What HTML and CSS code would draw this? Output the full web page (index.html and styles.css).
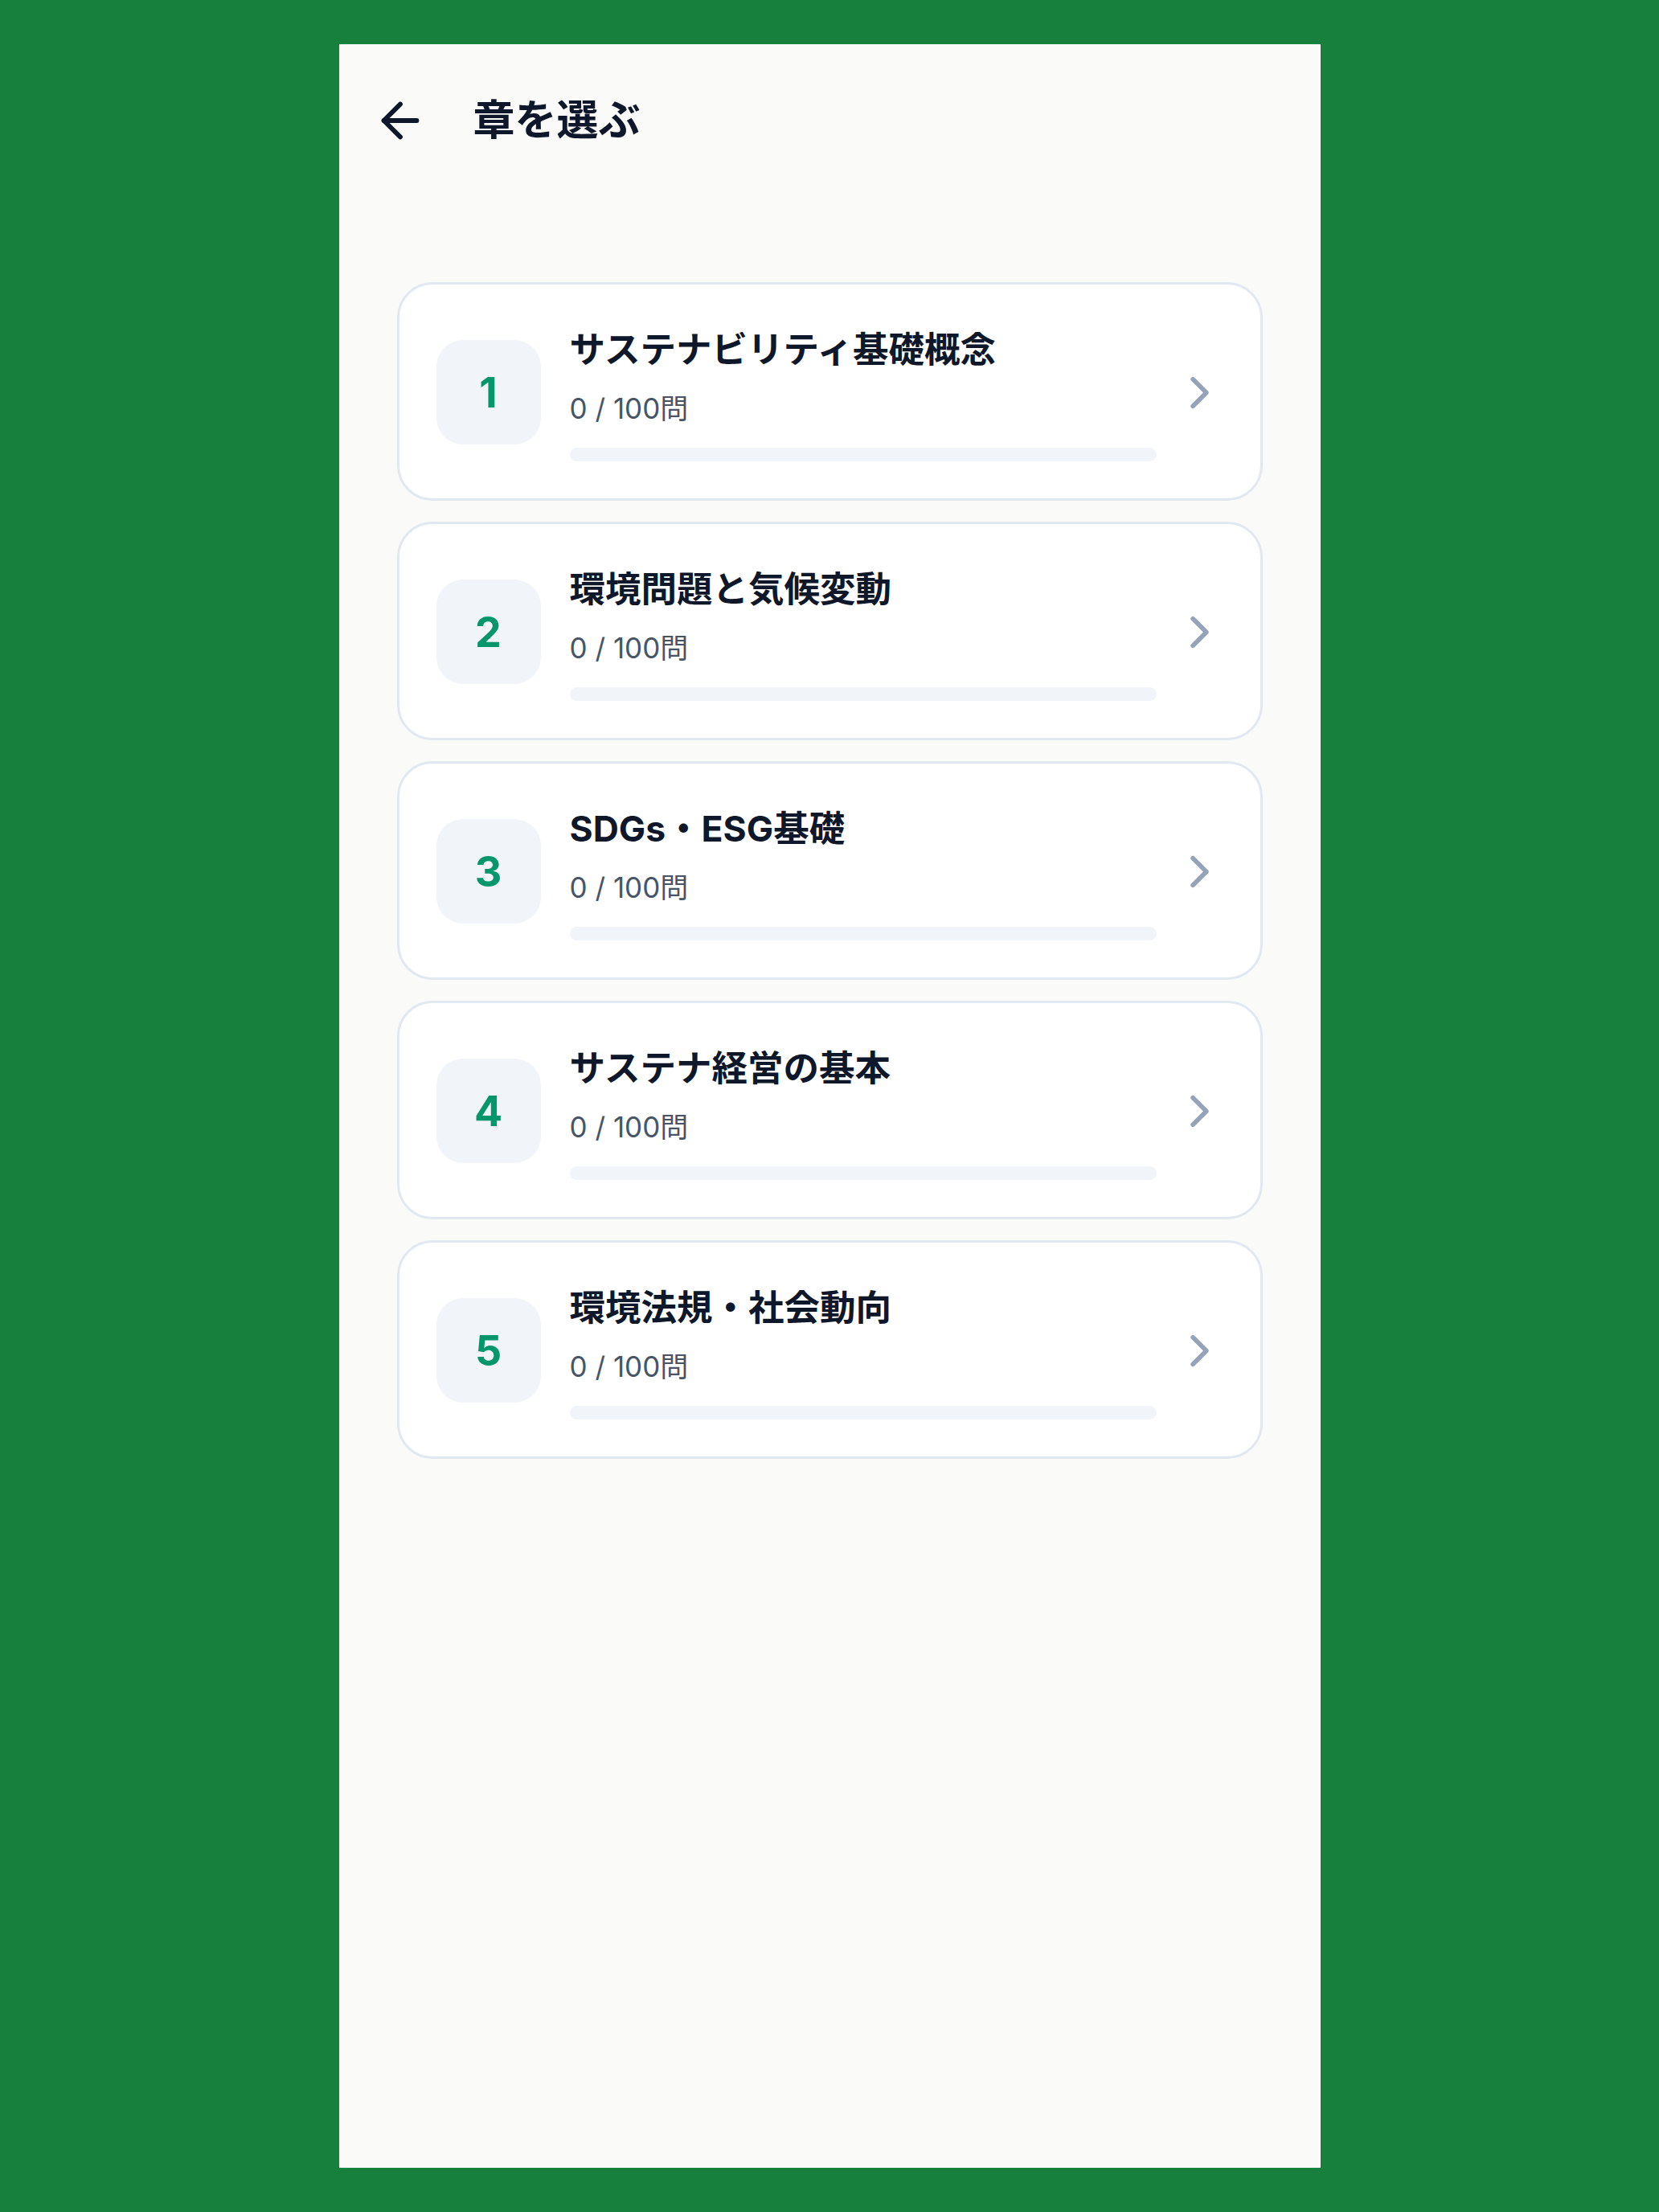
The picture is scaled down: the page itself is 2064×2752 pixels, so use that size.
FILE: index.html
```html
<!DOCTYPE html>
<html lang="ja">
<head>
<meta charset="utf-8">
<title>章を選ぶ</title>
<link rel="stylesheet" href="styles.css">
</head>
<body>
<div class="screen">
  <header class="topbar">
    <button class="back" aria-label="戻る">
      <svg viewBox="0 0 24 24" fill="none" stroke="currentColor" stroke-width="2" stroke-linecap="round" stroke-linejoin="round"><path d="m12 19-7-7 7-7"/><path d="M19 12H5"/></svg>
    </button>
    <h1 class="title">章を選ぶ</h1>
  </header>
  <main class="chapters">
    <a class="chapter" href="#">
      <div class="num">1</div>
      <div class="info">
        <div class="name">サステナビリティ基礎概念</div>
        <div class="count">0 / 100問</div>
        <div class="bar"><div class="fill" style="width:0%"></div></div>
      </div>
      <svg class="chev" viewBox="0 0 24 24" fill="none" stroke="currentColor" stroke-width="2" stroke-linecap="round" stroke-linejoin="round"><path d="m9 18 6-6-6-6"/></svg>
    </a>
    <a class="chapter" href="#">
      <div class="num">2</div>
      <div class="info">
        <div class="name">環境問題と気候変動</div>
        <div class="count">0 / 100問</div>
        <div class="bar"><div class="fill" style="width:0%"></div></div>
      </div>
      <svg class="chev" viewBox="0 0 24 24" fill="none" stroke="currentColor" stroke-width="2" stroke-linecap="round" stroke-linejoin="round"><path d="m9 18 6-6-6-6"/></svg>
    </a>
    <a class="chapter" href="#">
      <div class="num">3</div>
      <div class="info">
        <div class="name">SDGs・ESG基礎</div>
        <div class="count">0 / 100問</div>
        <div class="bar"><div class="fill" style="width:0%"></div></div>
      </div>
      <svg class="chev" viewBox="0 0 24 24" fill="none" stroke="currentColor" stroke-width="2" stroke-linecap="round" stroke-linejoin="round"><path d="m9 18 6-6-6-6"/></svg>
    </a>
    <a class="chapter" href="#">
      <div class="num">4</div>
      <div class="info">
        <div class="name">サステナ経営の基本</div>
        <div class="count">0 / 100問</div>
        <div class="bar"><div class="fill" style="width:0%"></div></div>
      </div>
      <svg class="chev" viewBox="0 0 24 24" fill="none" stroke="currentColor" stroke-width="2" stroke-linecap="round" stroke-linejoin="round"><path d="m9 18 6-6-6-6"/></svg>
    </a>
    <a class="chapter" href="#">
      <div class="num">5</div>
      <div class="info">
        <div class="name">環境法規・社会動向</div>
        <div class="count">0 / 100問</div>
        <div class="bar"><div class="fill" style="width:0%"></div></div>
      </div>
      <svg class="chev" viewBox="0 0 24 24" fill="none" stroke="currentColor" stroke-width="2" stroke-linecap="round" stroke-linejoin="round"><path d="m9 18 6-6-6-6"/></svg>
    </a>
  </main>
</div>
</body>
</html>
```
FILE: styles.css
```css
html, body {
  margin: 0;
  padding: 0;
  background: #17803d;
}
body {
  display: flex;
  justify-content: center;
  padding-top: 55px;
  font-family: Inter, "Noto Sans CJK JP", "Noto Sans", sans-serif;
  color: #0f172a;
}
.screen {
  width: 1221px;
  height: 2642px;
  background: #fafaf9;
  box-sizing: border-box;
}
.topbar {
  display: flex;
  align-items: center;
  padding: 60px 41px 0;
  gap: 56px;
}
.back {
  width: 70px;
  height: 70px;
  padding: 0;
  border: 0;
  background: none;
  color: #0f172a;
  display: flex;
}
.back svg {
  width: 70px;
  height: 70px;
}
.title {
  margin: 0;
  font-size: 52px;
  font-weight: 700;
  line-height: 70px;
  color: #0f172a;
}
.chapters {
  display: flex;
  flex-direction: column;
  gap: 26px;
  margin: 166px 72px 0;
}
.chapter {
  display: flex;
  align-items: center;
  background: #ffffff;
  border: 3px solid #e2e8f0;
  border-radius: 44px;
  padding: 51px 42px 46px 46px;
  text-decoration: none;
  color: inherit;
}
.num {
  flex: none;
  width: 130px;
  height: 130px;
  border-radius: 33px;
  background: #f1f5f9;
  color: #059669;
  font-size: 52px;
  font-weight: 700;
  display: flex;
  align-items: center;
  justify-content: center;
  margin-top: -3px;
}
.info {
  flex: 1;
  margin-left: 36px;
  display: flex;
  flex-direction: column;
}
.name {
  font-size: 44.5px;
  font-weight: 700;
  line-height: 60px;
  color: #0f172a;
}
.count {
  margin-top: 19px;
  font-size: 35px;
  line-height: 48px;
  color: #475569;
}
.bar {
  margin-top: 25px;
  height: 17px;
  border-radius: 9px;
  background: #f1f5f9;
  overflow: hidden;
}
.fill {
  height: 100%;
  background: #059669;
}
.chev {
  flex: none;
  width: 67px;
  height: 67px;
  margin-left: 20px;
  margin-top: -3px;
  color: #94a3b8;
}
```
